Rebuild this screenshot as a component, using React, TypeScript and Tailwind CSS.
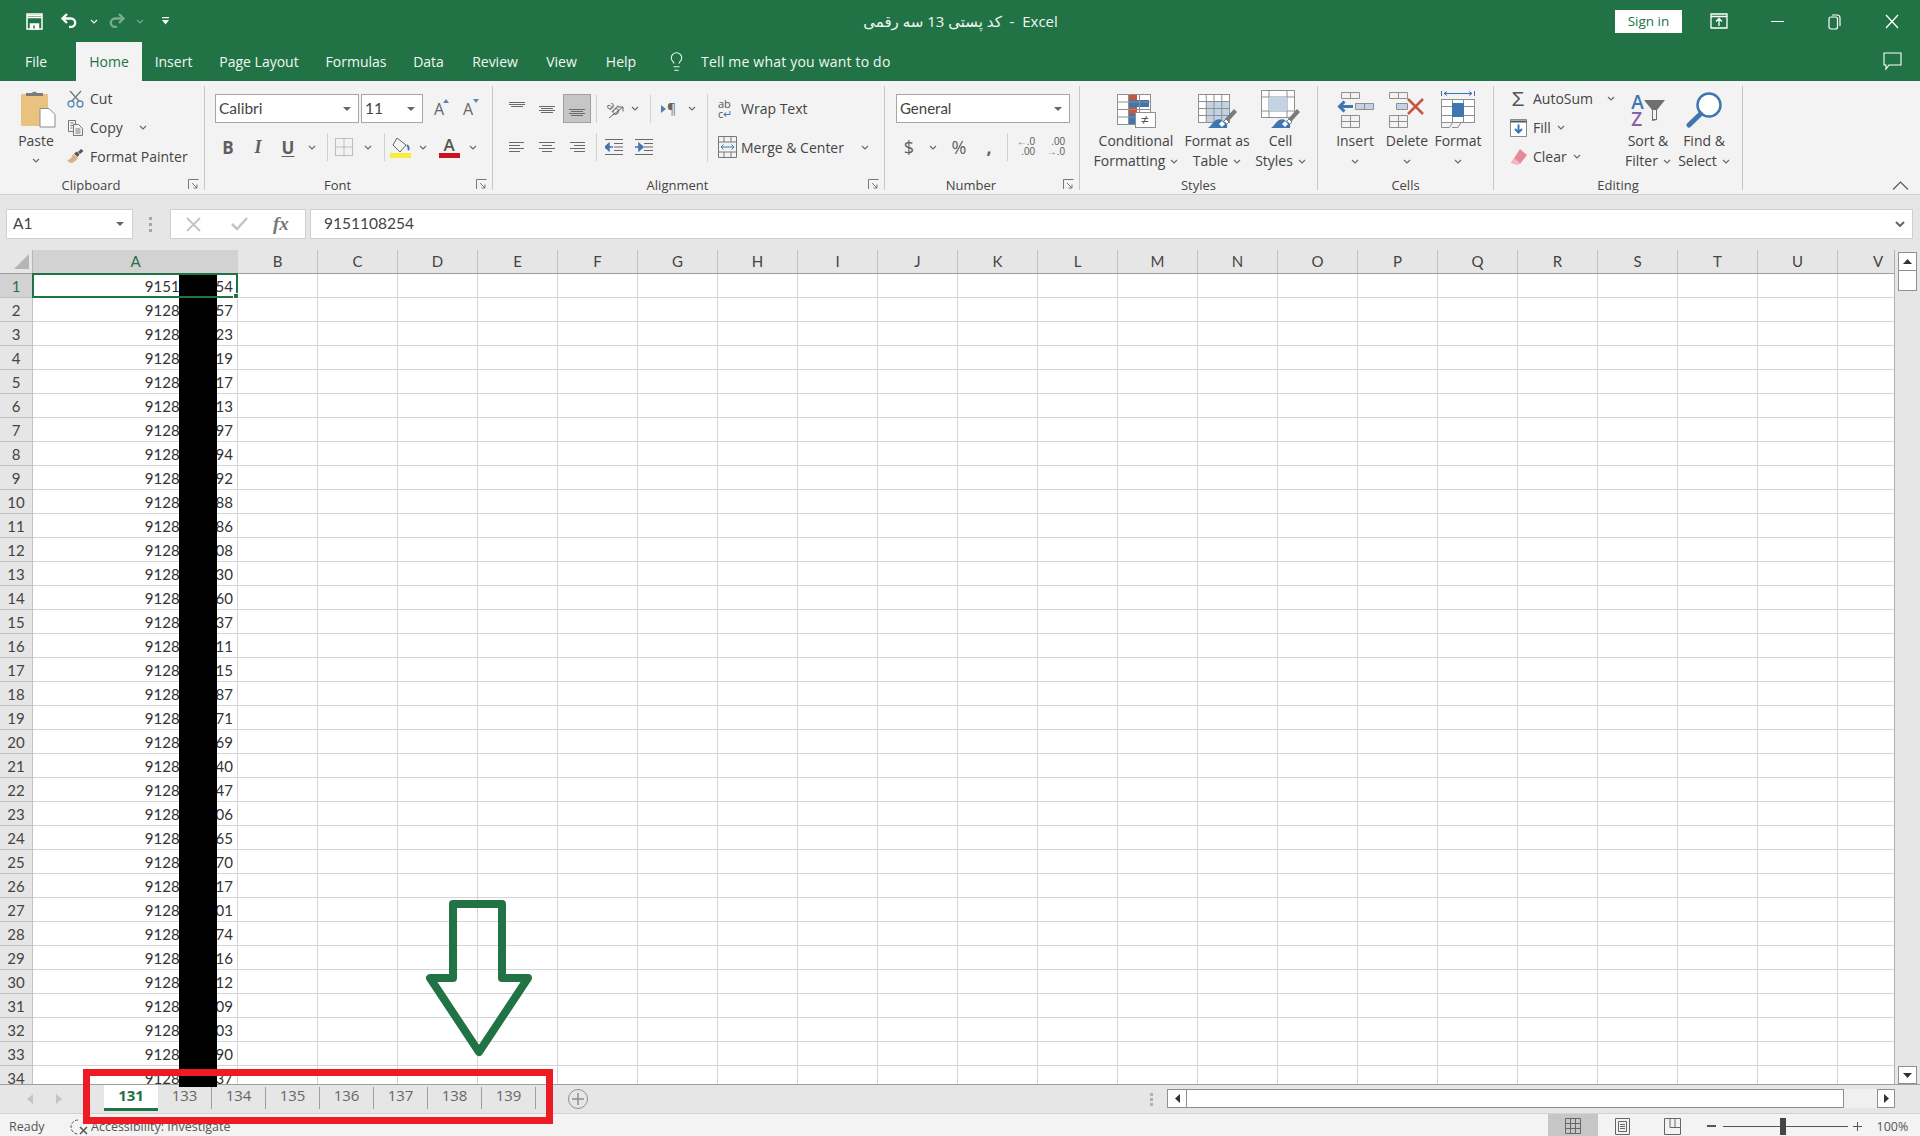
import type { ReactNode } from 'react';
import { Lightbulb } from 'lucide-react';

const suffixes = ['54', '57', '23', '19', '17', '13', '97', '94', '92', '88', '86', '08', '30', '60', '37', '11', '15', '87', '71', '69', '40', '47', '06', '65', '70', '17', '01', '74', '16', '12', '09', '03', '90', '37'];
const columns = ['B', 'C', 'D', 'E', 'F', 'G', 'H', 'I', 'J', 'K', 'L', 'M', 'N', 'O', 'P', 'Q', 'R', 'S', 'T', 'U'];
const sheets = ['133', '134', '135', '136', '137', '138', '139'];

function Caret({ color = '#666666' }: { color?: string }) {
    return (
        <svg width="8" height="5" viewBox="0 0 8 5" fill="none" stroke={color} strokeWidth="1.1">
            <path d="M1 1l3 3 3-3" />
        </svg>
    );
}

function DropTri() {
    return (
        <svg width="8" height="4" viewBox="0 0 8 4" fill="#666666">
            <path d="M0 0h8L4 4z" />
        </svg>
    );
}

function Lines({ rows, width = 16 }: { rows: [number, number, number][]; width?: number }) {
    return (
        <svg width={width} height="16" viewBox={`0 0 ${width} 16`} stroke="#6a6a6a" strokeWidth="1">
            {rows.map(([x1, x2, y], i) => (
                <line key={i} x1={x1} x2={x2} y1={y + 0.5} y2={y + 0.5} />
            ))}
        </svg>
    );
}

function Launcher() {
    return (
        <svg className="absolute bottom-0 right-[5px]" width="11" height="11" viewBox="0 0 11 11" fill="none" stroke="#777777">
            <path d="M.5 10V.5H10.5M4 4l5 5M9 5.5V9H5.5" />
        </svg>
    );
}

function Group({ label, width, launcher, children }: { label: string; width: string; launcher?: boolean; children: ReactNode }) {
    return (
        <div className={`relative flex h-[104px] shrink-0 flex-col border-r border-[#c6c6c6] ${width}`}>
            <div className="flex h-[93px] shrink-0">{children}</div>
            <div className={`text-center text-[13px] leading-[13px] text-[#444444] ${launcher ? 'pr-[22px]' : ''}`}>{label}</div>
            {launcher && <Launcher />}
        </div>
    );
}

function LargeButton({ width, icon, lines, caretOwnLine }: { width: string; icon: ReactNode; lines: string[]; caretOwnLine?: boolean }) {
    return (
        <div className={`flex shrink-0 flex-col items-center text-[14px] leading-[20px] text-[#444444] ${width}`}>
            <div className="flex h-[42px] items-end justify-center">{icon}</div>
            <div className="mt-[3px] whitespace-nowrap">{lines[0]}</div>
            {caretOwnLine ? (
                <div className="flex h-[20px] items-center">
                    <Caret />
                </div>
            ) : (
                <div className="flex items-center gap-[5px] whitespace-nowrap">
                    {lines[1]}
                    <Caret />
                </div>
            )}
        </div>
    );
}

function SmallRow({ icon, label, caretGap }: { icon: ReactNode; label: string; caretGap?: string }) {
    return (
        <div className="flex h-[29px] items-center whitespace-nowrap text-[14px] text-[#444444]">
            <div className="flex w-[24px] shrink-0 justify-center">{icon}</div>
            <span className="ml-[3px]">{label}</span>
            {caretGap && (
                <span className={`flex ${caretGap}`}>
                    <Caret />
                </span>
            )}
        </div>
    );
}

function Slot({ width, children }: { width: string; children: ReactNode }) {
    return <div className={`flex h-full shrink-0 items-center justify-center ${width}`}>{children}</div>;
}

const Sep = ({ className = '' }: { className?: string }) => <div className={`h-[28px] w-px shrink-0 bg-[#d0d0d0] ${className}`} />;

function SaveIcon() {
    return (
        <svg width="17" height="17" viewBox="0 0 17 17" fill="none" stroke="#ffffff" strokeWidth="1.5">
            <path d="M1 1h15v15H1z" />
            <path d="M1 2.5h15M1 4.5h15" />
            <path fill="#ffffff" d="M4.5 11h8v5h-8z" />
            <path stroke="#217346" d="M8 12.5v3" />
        </svg>
    );
}

function UndoIcon({ mirrored }: { mirrored?: boolean }) {
    return (
        <svg className={mirrored ? 'opacity-40 -scale-x-100' : ''} width="18" height="16" viewBox="0 0 18 16" fill="none" stroke="#ffffff" strokeWidth="2.4">
            <path d="M7 1L2.5 5.5 7 10" />
            <path d="M3 5.5h8a4.2 4.2 0 0 1 0 8.4H9" />
        </svg>
    );
}

function TitleBar() {
    return (
        <div className="flex h-[42px] shrink-0 items-center bg-[#217346] text-white">
            <div className="flex w-[863px] shrink-0 items-center pl-[26px]">
                <SaveIcon />
                <span className="ml-[17px] flex"><UndoIcon /></span>
                <span className="ml-[12px] flex"><Caret color="#ffffff" /></span>
                <span className="ml-[10px] flex"><UndoIcon mirrored /></span>
                <span className="ml-[10px] flex opacity-40"><Caret color="#ffffff" /></span>
                <svg className="ml-[18px]" width="7" height="8" viewBox="0 0 7 8" fill="#ffffff">
                    <path d="M0 0h7v1.2H0zM0 3h7L3.5 7.5z" />
                </svg>
            </div>
            <div className="w-[195px] shrink-0 whitespace-pre text-center font-['Open_Sans','DejaVu_Sans',sans-serif] text-[15px] text-[#f2f7f4]">
                کد پستی 13 سه رقمی  -  Excel
            </div>
            <div className="ml-[557px] flex h-[23px] w-[67px] shrink-0 items-center justify-center bg-white text-[13.5px] text-[#217346]">Sign in</div>
            <svg className="ml-[28px]" width="18" height="16" viewBox="0 0 18 16" fill="none" stroke="#ffffff" strokeWidth="1.3">
                <path d="M1 1h16v14H1zM1 3.5h16M9 13V6M6 8.5l3-3 3 3" />
            </svg>
            <div className="ml-[43px] h-px w-[13px] bg-white" />
            <svg className="ml-[44px]" width="13" height="17" viewBox="0 0 13 17" fill="none" stroke="#ffffff" strokeWidth="1.2">
                <rect x="1" y="4" width="8.5" height="12" rx="2" />
                <path d="M4 2h5a3 3 0 0 1 3 3v8" />
            </svg>
            <svg className="ml-[44px]" width="14" height="15" viewBox="0 0 14 15" fill="none" stroke="#ffffff" strokeWidth="1.3">
                <path d="M1 1l12 13M13 1L1 14" />
            </svg>
        </div>
    );
}

function TabRow() {
    const tabs: [string, string][] = [
        ['Insert', 'w-[63px]'],
        ['Page Layout', 'w-[108px]'],
        ['Formulas', 'w-[86px]'],
        ['Data', 'w-[59px]'],
        ['Review', 'w-[74px]'],
        ['View', 'w-[59px]'],
        ['Help', 'w-[60px]'],
    ];

    return (
        <div className="flex h-[39px] shrink-0 items-stretch bg-[#217346] text-[14px] text-[#f2f7f4]">
            <div className="flex w-[76px] items-center pl-[25px]">File</div>
            <div className="flex w-[66px] items-center justify-center bg-[#f3f3f3] text-[#217346]">Home</div>
            {tabs.map(([name, width]) => (
                <div key={name} className={`flex items-center justify-center ${width}`}>
                    {name}
                </div>
            ))}
            <div className="ml-[15px] flex items-center">
                <Lightbulb size={21} strokeWidth={1.2} />
                <span className="ml-[14px] tracking-[0.2px]">Tell me what you want to do</span>
            </div>
            <svg className="ml-[992px] self-center" width="19" height="19" viewBox="0 0 19 19" fill="none" stroke="#ffffff" strokeWidth="1.1">
                <path d="M1 1h17v12H6l-3 4v-4H1z" />
            </svg>
        </div>
    );
}

function Clipboard() {
    return (
        <Group label="Clipboard" width="w-[205px]" launcher>
            <div className="-mt-[2px] flex w-[63px] shrink-0 flex-col items-center pl-[9px] text-[14px] leading-[20px] text-[#444444]">
                <svg className="ml-[5px] mt-[6px]" width="35" height="38" viewBox="0 0 35 38">
                    <rect x="0" y="4" width="27" height="32" rx="1" fill="#e9c27f" />
                    <path d="M5 5V3h6a3 3 0 0 1 5 0h6v3H5z" fill="#7b7b7b" />
                    <path d="M19 18.500h9l6 6V37H19z" fill="#ffffff" stroke="#8c8c8c" />
                </svg>
                <div className="mt-[3px]">Paste</div>
                <div className="flex h-[18px] items-center"><Caret /></div>
            </div>
            <div className="-mt-[2px] flex flex-col">
                <SmallRow
                    label="Cut"
                    icon={
                        <svg width="17" height="18" viewBox="0 0 17 18" fill="none" stroke="#777777" strokeWidth="1.3">
                            <path d="M5 11L14 1M12 11L3 1" />
                            <circle cx="4" cy="14" r="3" stroke="#5a86b4" />
                            <circle cx="13" cy="14" r="3" stroke="#5a86b4" />
                        </svg>
                    }
                />
                <SmallRow
                    label="Copy"
                    caretGap="ml-[16px]"
                    icon={
                        <svg width="17" height="17" viewBox="0 0 17 17" fill="#f3f3f3" stroke="#777777">
                            <path d="M1.500 1.500h7v11h-7zM3.500 4h3M3.500 6.500h3M3.500 9h2" />
                            <path d="M6.500 5.500h5l4 4v7h-9z" />
                            <path d="M8.500 10h5M8.500 12h5M8.500 14h5" />
                        </svg>
                    }
                />
                <SmallRow
                    label="Format Painter"
                    icon={
                        <svg width="18" height="15" viewBox="0 0 18 15">
                            <path d="M1 11c3 0 5-3 6-6l5 4c-2 3-5 5-8 5z" fill="#d8b27c" />
                            <path d="M8 4.500l3-2 2.500 3-2 2.500zM12 3l3-3 2.500 2-3.500 3z" fill="#555555" />
                        </svg>
                    }
                />
            </div>
        </Group>
    );
}

function FontGroup() {
    return (
        <Group label="Font" width="w-[288px]" launcher>
            <div className="flex flex-col pl-[10px] pt-[8px]">
                <div className="flex h-[29px] items-stretch font-['Lato',sans-serif] text-[15.5px] text-[#444444]">
                    <div className="flex w-[144px] items-center justify-between border border-[#a6a6a6] bg-white pl-[3px] pr-[7px]">
                        Calibri
                        <DropTri />
                    </div>
                    <div className="ml-[2px] flex w-[62px] items-center justify-between border border-[#a6a6a6] bg-white pl-[3px] pr-[7px]">
                        11
                        <DropTri />
                    </div>
                    <div className="relative flex w-[32px] items-center justify-center font-['Open_Sans',sans-serif] text-[16px] text-[#666666]">
                        A
                        <svg className="absolute right-[6px] top-[5px]" width="6" height="4" fill="#5a86b4"><path d="M0 4h6L3 0z" /></svg>
                    </div>
                    <div className="relative flex w-[26px] items-center justify-center font-['Open_Sans',sans-serif] text-[16px] text-[#666666]">
                        A
                        <svg className="absolute right-[2px] top-[5px]" width="6" height="4" fill="#5a86b4"><path d="M0 0h6L3 4z" /></svg>
                    </div>
                </div>
                <div className="-ml-[2px] mt-[9px] flex h-[30px] items-center text-[#5f5f5f]">
                    <Slot width="w-[30px]"><span className="text-[17px] font-bold leading-none">B</span></Slot>
                    <Slot width="w-[30px]"><span className="font-['Liberation_Serif',serif] text-[18px] font-bold italic leading-none">I</span></Slot>
                    <Slot width="w-[30px]"><span className="text-[17px] font-bold leading-none underline underline-offset-2">U</span></Slot>
                    <Slot width="w-[18px]"><Caret /></Slot>
                    <Sep className="ml-[6px]" />
                    <Slot width="w-[31px]">
                        <svg width="18" height="18" viewBox="0 0 18 18" fill="none" stroke="#8a8a8a" strokeDasharray="1 1">
                            <path d="M.5.5h17v17H.5zM9 .5v17M.5 9h17" />
                        </svg>
                    </Slot>
                    <Slot width="w-[18px]"><Caret /></Slot>
                    <Sep className="ml-[7px]" />
                    <Slot width="w-[30px]">
                        <svg width="21" height="21" viewBox="0 0 21 21">
                            <path d="M7 1l9 7-6 7-7-7z" fill="#f3f3f3" stroke="#666666" />
                            <path d="M17 8c2 2 2 4 1 5" fill="none" stroke="#3f76b0" strokeWidth="2" />
                            <rect x="0" y="16" width="21" height="5" fill="#f6ed3c" />
                        </svg>
                    </Slot>
                    <Slot width="w-[15px]"><Caret /></Slot>
                    <div className="ml-[4px] flex w-[30px] shrink-0 flex-col items-center">
                        <span className="text-[17px] font-semibold leading-[17px] text-[#555555]">A</span>
                        <div className="h-[5px] w-[21px] bg-[#c8141c]" />
                    </div>
                    <Slot width="w-[17px]"><Caret /></Slot>
                </div>
            </div>
        </Group>
    );
}

const alignTop: [number, number, number][] = [[0, 16, 1], [0, 16, 3], [2, 14, 5]];
const alignMid: [number, number, number][] = [[0, 16, 5], [2, 14, 7], [0, 16, 9], [2, 14, 11]];
const alignBot: [number, number, number][] = [[0, 16, 8], [2, 14, 10], [0, 16, 12], [2, 14, 14]];
const textLeft: [number, number, number][] = [[0, 15, 3], [0, 11, 6], [0, 15, 9], [0, 11, 12]];
const textCenter: [number, number, number][] = [[0, 16, 3], [3, 13, 6], [0, 16, 9], [3, 13, 12]];
const textRight: [number, number, number][] = [[1, 16, 3], [5, 16, 6], [1, 16, 9], [5, 16, 12]];

function IndentIcon({ flip }: { flip?: boolean }) {
    return (
        <svg width="18" height="16" viewBox="0 0 18 16" fill="none">
            <path d="M0 .5h18M9 4.500h9M9 8h9M9 11.500h9M0 15.500h18" stroke="#6a6a6a" />
            <path d={flip ? 'M0 8h5M4 4.500L8 8l-4 3.500z' : 'M8 8H3M4 4.500L0 8l4 3.500z'} stroke="#3f76b0" strokeWidth="1.5" fill="#3f76b0" />
        </svg>
    );
}

function Alignment() {
    return (
        <Group label="Alignment" width="w-[392px]" launcher>
            <div className="flex flex-col pl-[9px] pt-[8px]">
                <div className="flex h-[29px] items-center">
                    <Slot width="w-[30px]"><Lines rows={alignTop} /></Slot>
                    <Slot width="w-[30px]"><Lines rows={alignMid} /></Slot>
                    <div className="ml-px flex h-[29px] w-[28px] items-center justify-center border border-[#a0a0a0] bg-[#c6c6c6]">
                        <Lines rows={alignBot} />
                    </div>
                    <Sep className="ml-[5px]" />
                    <Slot width="w-[33px]">
                        <svg className="overflow-visible" width="22" height="22" viewBox="0 0 22 22" fill="none" stroke="#666666">
                            <text x="4" y="12" fontSize="12" fill="#666666" stroke="none" transform="rotate(45 8 9)">ab</text>
                            <path d="M6 20L20 9M15 9h5v4.500" />
                        </svg>
                    </Slot>
                    <Slot width="w-[10px]"><Caret /></Slot>
                    <Sep className="ml-[10px]" />
                    <div className="ml-[10px] flex w-[20px] items-center text-[14px] leading-none text-[#666666]">
                        <svg width="5" height="8" fill="#4f7fb0"><path d="M0 0l5 4-5 4z" /></svg>
                        <span className="ml-px">¶</span>
                    </div>
                    <Slot width="w-[22px]"><Caret /></Slot>
                </div>
                <div className="mt-[9px] flex h-[30px] items-center">
                    <Slot width="w-[30px]"><Lines rows={textLeft} /></Slot>
                    <Slot width="w-[30px]"><Lines rows={textCenter} /></Slot>
                    <Slot width="w-[29px]"><Lines rows={textRight} /></Slot>
                    <Sep className="ml-[5px]" />
                    <Slot width="w-[33px]"><IndentIcon /></Slot>
                    <Slot width="w-[27px]"><IndentIcon flip /></Slot>
                </div>
            </div>
            <div className="ml-[4px] mt-[8px] h-[68px] w-px shrink-0 bg-[#d0d0d0]" />
            <div className="flex flex-col pl-[10px] pt-[8px] text-[14px] text-[#444444]">
                <div className="flex h-[29px] items-center">
                    <div className="flex w-[20px] flex-col font-['Open_Sans',sans-serif] text-[11px] leading-[10px] text-[#555555]">
                        <span>ab</span>
                        <span>
                            c<span className="text-[#3f76b0]">↵</span>
                        </span>
                    </div>
                    <span className="ml-[3px]">Wrap Text</span>
                </div>
                <div className="mt-[9px] flex h-[30px] items-center">
                    <svg width="19" height="22" viewBox="0 0 19 22" fill="none" stroke="#777777">
                        <path d="M.5.5h18v21H.5zM.5 6h18M.5 16h18M6 .5V6M13 .5V6M6 16v5.500M13 16v5.500" />
                        <path d="M3 11h13M5.500 8.500L3 11l2.500 2.500M13.500 8.500L16 11l-2.500 2.500" stroke="#3f76b0" />
                    </svg>
                    <span className="ml-[4px]">Merge &amp; Center</span>
                    <span className="ml-[17px] flex"><Caret /></span>
                </div>
            </div>
        </Group>
    );
}

function NumberGroup() {
    return (
        <Group label="Number" width="w-[195px]" launcher>
            <div className="flex flex-col pl-[11px] pt-[8px]">
                <div className="flex h-[29px] w-[174px] items-center justify-between border border-[#a6a6a6] bg-white pl-[3px] pr-[7px] font-['Lato',sans-serif] text-[15px] text-[#444444]">
                    General
                    <DropTri />
                </div>
                <div className="mt-[9px] flex h-[30px] items-center text-[#5f5f5f]">
                    <Slot width="w-[26px]"><span className="text-[18px] leading-none">$</span></Slot>
                    <Slot width="w-[22px]"><Caret /></Slot>
                    <Slot width="w-[30px]"><span className="text-[18px] leading-none">%</span></Slot>
                    <Slot width="w-[30px]"><span className="text-[18px] font-bold leading-none">,</span></Slot>
                    <Sep className="ml-[3px]" />
                    <Slot width="w-[36px]">
                        <div className="font-['Liberation_Sans',sans-serif] text-[10px] leading-[10px]">
                            <div><span className="text-[#3f76b0]">←</span>.0</div>
                            <div className="text-right">.00</div>
                        </div>
                    </Slot>
                    <Slot width="w-[24px]">
                        <div className="font-['Liberation_Sans',sans-serif] text-[10px] leading-[10px]">
                            <div className="text-right">.00</div>
                            <div><span className="text-[#3f76b0]">→</span>.0</div>
                        </div>
                    </Slot>
                </div>
            </div>
        </Group>
    );
}

function TableGrid({ x, y, cols, rows, w, h }: { x: number; y: number; cols: number; rows: number; w: number; h: number }) {
    const cells = [];
    for (let i = 0; i <= cols; i++) cells.push(<line key={`c${i}`} x1={x + i * w + 0.5} x2={x + i * w + 0.5} y1={y} y2={y + rows * h} />);
    for (let i = 0; i <= rows; i++) cells.push(<line key={`r${i}`} y1={y + i * h + 0.5} y2={y + i * h + 0.5} x1={x} x2={x + cols * w + 1} />);
    return <g stroke="#8f8f8f">{cells}</g>;
}

function ConditionalIcon() {
    return (
        <svg width="39" height="34" viewBox="0 0 39 34">
            <rect x="0" y="0" width="33" height="30" fill="#ffffff" />
            <rect x="11" y="0" width="9" height="6" fill="#c5563f" />
            <rect x="11" y="6" width="21" height="7" fill="#3f76b0" />
            <rect x="11" y="13" width="9" height="7" fill="#c5563f" />
            <rect x="11" y="20" width="7" height="10" fill="#3f76b0" />
            <TableGrid x={0} y={0} cols={3} rows={4} w={11} h={7.500} />
            <rect x="18.500" y="18.500" width="20" height="15" fill="#ffffff" stroke="#8f8f8f" />
            <text x="24" y="31" fontSize="14" fill="#555555">≠</text>
        </svg>
    );
}

function BrushOverlay() {
    return (
        <g>
            <path d="M36 9l3 3-9 10-3-3z" fill="#7a7a7a" />
            <path d="M28 19l3 3-3 3-3-3z" fill="#ffffff" stroke="#7a7a7a" />
            <path d="M25 21c3 1 5 3 4 7H10c3-2 5-6 8-8 2-1 5-1 7 1z" fill="#3f76b0" />
            <path d="M21 24l3-3 3 3-3 3z" fill="#ffffff" />
        </g>
    );
}

function FormatTableIcon() {
    return (
        <svg width="39" height="34" viewBox="0 0 39 34">
            <rect x="0" y="0" width="31" height="28" fill="#ffffff" />
            <rect x="8" y="7" width="23" height="21" fill="#c2d3e6" />
            <TableGrid x={0} y={0} cols={4} rows={4} w={7.750} h={7} />
            <g transform="translate(0 6)"><BrushOverlay /></g>
        </svg>
    );
}

function CellStylesIcon() {
    return (
        <svg width="39" height="38" viewBox="0 0 39 38">
            <rect x=".5" y=".5" width="33" height="27" fill="#ffffff" stroke="#8f8f8f" />
            <path d="M8 .5v27M26 .5v27M.5 7h33M.5 21h33" stroke="#8f8f8f" />
            <rect x="8" y="7" width="18" height="14" fill="#c2d3e6" />
            <g transform="translate(0 10)"><BrushOverlay /></g>
        </svg>
    );
}

function InsertIcon() {
    return (
        <svg width="37" height="36" viewBox="0 0 37 36" fill="none" stroke="#8f8f8f">
            <path d="M4.500.5h18v6h-18zM13.500.5v6M4.500 23.500h18v12h-18zM13.500 23.500v12M4.500 29.500h18" />
            <path d="M18.500 11.500h18v6h-18zM27.500 11.500v6" fill="#c2d3e6" />
            <path d="M16 14.500H3M7.500 9.500l-5 5 5 5" stroke="#3f76b0" strokeWidth="3" />
        </svg>
    );
}

function DeleteIcon() {
    return (
        <svg width="36" height="36" viewBox="0 0 36 36" fill="none" stroke="#8f8f8f">
            <path d="M.5.5h18v6H.5zM9.500.5v6M.5 23.500h18v12H.5zM9.500 23.500v12M.5 29.500h18" />
            <path d="M7.500 11.500h11v6h-11z" fill="#c2d3e6" />
            <path d="M19 7l15 15M34 7L19 22" stroke="#c5563f" strokeWidth="2.500" />
        </svg>
    );
}

function FormatIcon() {
    return (
        <svg width="34" height="37" viewBox="0 0 34 37" fill="none" stroke="#8f8f8f">
            <path d="M.5 0v5M33.500 0v5" stroke="#3f76b0" />
            <path d="M3 2.500h28M6 .5L3 2.500l3 2M28 .5l3 2-3 2" stroke="#3f76b0" />
            <rect x=".5" y="8.500" width="33" height="23" fill="#ffffff" />
            <path d="M11.500 8.500v23M22.500 8.500v23M.5 15.500h33M.5 24.500h33" />
            <rect x="11" y="12" width="12" height="14" fill="#3f76b0" stroke="none" />
            <path d="M.5 31.500v5h8l3-5M11 36.500h6l3-5" />
        </svg>
    );
}

function Styles() {
    return (
        <Group label="Styles" width="w-[238px]">
            <div className="ml-[9px] flex">
                <LargeButton width="w-[94px]" icon={<ConditionalIcon />} lines={['Conditional', 'Formatting']} />
                <LargeButton width="w-[68px]" icon={<FormatTableIcon />} lines={['Format as', 'Table']} />
                <LargeButton width="w-[59px]" icon={<CellStylesIcon />} lines={['Cell', 'Styles']} />
            </div>
        </Group>
    );
}

function Cells() {
    return (
        <Group label="Cells" width="w-[176px]">
            <div className="ml-[10px] flex">
                <LargeButton width="w-[54px]" icon={<InsertIcon />} lines={['Insert']} caretOwnLine />
                <LargeButton width="w-[50px]" icon={<DeleteIcon />} lines={['Delete']} caretOwnLine />
                <LargeButton width="w-[52px]" icon={<FormatIcon />} lines={['Format']} caretOwnLine />
            </div>
        </Group>
    );
}

function Editing() {
    return (
        <Group label="Editing" width="w-[249px]">
            <div className="-mt-[2px] ml-[12px] flex w-[112px] shrink-0 flex-col">
                <SmallRow label="AutoSum" caretGap="ml-[14px]" icon={<span className="font-['Liberation_Sans',sans-serif] text-[21px] leading-none text-[#555555]">Σ</span>} />
                <SmallRow
                    label="Fill"
                    caretGap="ml-[6px]"
                    icon={
                        <svg width="17" height="18" viewBox="0 0 17 18" fill="#ffffff" stroke="#8a8a8a">
                            <path d="M.5.5h16v17H.5z" />
                            <path d="M.5 2.500h16" stroke="#555555" strokeWidth="2" />
                            <path d="M8.500 5.500v8M5 10l3.500 3.500L12 10" fill="none" stroke="#3f76b0" strokeWidth="2" />
                        </svg>
                    }
                />
                <SmallRow
                    label="Clear"
                    caretGap="ml-[6px]"
                    icon={
                        <svg width="17" height="16" viewBox="0 0 17 16">
                            <path d="M10 0l7 6-7 9-9-1z" fill="#e68a9b" />
                            <path d="M1 14l3-5 6 5-3 2z" fill="#f3b8c2" />
                        </svg>
                    }
                />
            </div>
            <LargeButton
                width="w-[60px]"
                icon={
                    <div className="flex items-start">
                        <div className="flex flex-col font-['Open_Sans',sans-serif] text-[19px] font-semibold leading-[17px]">
                            <span className="text-[#3f76b0]">A</span>
                            <span className="text-[#8a5fa8]">Z</span>
                        </div>
                        <svg className="mt-[6px]" width="21" height="21" viewBox="0 0 21 21">
                            <path d="M0 0h21l-8 10v10l-5 1V10z" fill="#6f6f6f" />
                            <path d="M9 10h3v9H9z" fill="#f3f3f3" />
                        </svg>
                    </div>
                }
                lines={['Sort &', 'Filter']}
            />
            <LargeButton
                width="w-[52px]"
                icon={
                    <svg width="36" height="36" viewBox="0 0 36 36" fill="none">
                        <circle cx="23" cy="13" r="11.500" stroke="#3f76b0" strokeWidth="2.500" fill="#ffffff" />
                        <path d="M14.500 22L3 33" stroke="#3f76b0" strokeWidth="5" strokeLinecap="round" />
                    </svg>
                }
                lines={['Find &', 'Select']}
            />
        </Group>
    );
}

function Ribbon() {
    return (
        <div className="flex h-[114px] shrink-0 border-b border-[#d2d2d2] bg-[#f3f3f3] pt-[5px]">
            <Clipboard />
            <FontGroup />
            <Alignment />
            <NumberGroup />
            <Styles />
            <Cells />
            <Editing />
            <div className="flex flex-1 items-end justify-end pb-[4px] pr-[11px]">
                <svg width="17" height="9" viewBox="0 0 17 9" fill="none" stroke="#555555" strokeWidth="1.1">
                    <path d="M1 8.500l7.500-7.500L16 8.500" />
                </svg>
            </div>
        </div>
    );
}

function FormulaBar() {
    return (
        <div className="flex h-[55px] shrink-0 items-center bg-[#e6e6e6] pl-[6px] pr-[7px] pt-[3px] font-['Lato',sans-serif] text-[15.5px] text-[#444444]">
            <div className="flex h-[30px] w-[127px] items-center justify-between border border-[#d0d0d0] bg-white pl-[6px] pr-[8px]">
                A1
                <DropTri />
            </div>
            <div className="ml-[16px] flex w-[4px] flex-col gap-[3px]">
                <div className="h-[3px] w-[3px] bg-[#a6a6a6]" />
                <div className="h-[3px] w-[3px] bg-[#a6a6a6]" />
                <div className="h-[3px] w-[3px] bg-[#a6a6a6]" />
            </div>
            <div className="ml-[17px] flex h-[30px] w-[136px] items-center border border-[#d0d0d0] bg-white">
                <svg className="ml-[15px]" width="15" height="15" viewBox="0 0 15 15" fill="none" stroke="#c4c4c4" strokeWidth="1.800">
                    <path d="M1 1l13 13M14 1L1 14" />
                </svg>
                <svg className="ml-[30px]" width="17" height="14" viewBox="0 0 17 14" fill="none" stroke="#c4c4c4" strokeWidth="2.500">
                    <path d="M1 7l5 5L16 1" />
                </svg>
                <span className="ml-[25px] font-['Liberation_Serif',serif] text-[19px] font-bold italic text-[#777777]">fx</span>
            </div>
            <div className="ml-[4px] flex h-[30px] flex-1 items-center justify-between border border-[#d0d0d0] bg-white pl-[13px] pr-[7px]">
                9151108254
                <svg width="10" height="6" viewBox="0 0 10 6" fill="none" stroke="#666666" strokeWidth="2">
                    <path d="M1 1l4 4 4-4" />
                </svg>
            </div>
        </div>
    );
}

function Sheet() {
    return (
        <div className="flex h-[834px] w-[1895px] shrink-0 flex-col overflow-hidden border-r border-[#b0b0b0] font-['Lato',sans-serif] text-[15px] text-[#333333]">
            <div className="flex h-[24px] shrink-0 border-b border-[#9e9e9e] bg-[#e6e6e6] text-[#444444]">
                <div className="flex h-full w-[33px] shrink-0 items-center justify-end border-r border-[#b8b8b8] pr-[3px]">
                    <svg width="15" height="15" viewBox="0 0 15 15" fill="#b5b5b5"><path d="M15 0v15H0z" /></svg>
                </div>
                <div className="flex w-[205px] shrink-0 items-center justify-center bg-[#d2d2d2] text-[#217346]">A</div>
                {columns.map((col) => (
                    <div key={col} className="flex w-[80px] shrink-0 items-center justify-center border-r border-[#c2c2c2]">
                        {col}
                    </div>
                ))}
                <div className="flex w-[80px] shrink-0 items-center justify-center">V</div>
            </div>
            {suffixes.map((suffix, i) => (
                <div key={i} className="flex h-[24px] shrink-0">
                    <div className={`flex w-[33px] shrink-0 items-center justify-center border-b border-r border-[#c2c2c2] pt-[2px] ${i === 0 ? 'bg-[#d2d2d2] text-[#2f6b4a]' : 'bg-[#e6e6e6] text-[#444444]'}`}>{i + 1}</div>
                    <div className="relative flex w-[205px] shrink-0 items-center justify-end border-b border-r border-[#d4d4d4] pr-[4px] pt-[2px]">
                        <span>{i === 0 ? '9151' : '9128'}</span>
                        <span className="w-[36px]" />
                        <span>{suffix}</span>
                        {i === 0 && (
                            <div className="absolute -left-px -top-px z-10 h-[25px] w-[206px] border-2 border-[#217346]">
                                <div className="absolute -bottom-[3px] -right-[3px] h-[6px] w-[6px] border border-white bg-[#217346]" />
                            </div>
                        )}
                    </div>
                    {columns.map((col) => (
                        <div key={col} className="w-[80px] shrink-0 border-b border-r border-[#d4d4d4]" />
                    ))}
                    <div className="w-[80px] shrink-0 border-b border-[#d4d4d4]" />
                </div>
            ))}
        </div>
    );
}

function VerticalScroll() {
    return (
        <div className="flex flex-1 flex-col bg-[#e6e6e6] pl-[3px] pr-[3px] pt-[2px]">
            <div className="flex h-[19px] items-center justify-center border border-[#8f8f8f] bg-white">
                <svg width="9" height="5" fill="#333333"><path d="M0 5h9L4.500 0z" /></svg>
            </div>
            <div className="h-[20px] border border-t-0 border-[#8f8f8f] bg-white" />
            <div className="flex-1" />
            <div className="flex h-[18px] items-center justify-center border border-[#8f8f8f] bg-white">
                <svg width="9" height="5" fill="#333333"><path d="M0 0h9L4.500 5z" /></svg>
            </div>
        </div>
    );
}

function TabBar() {
    return (
        <div className="flex h-[29px] shrink-0 items-stretch border-t border-[#9e9e9e] bg-[#e6e6e6] font-['Open_Sans',sans-serif] text-[15px] text-[#666666]">
            <div className="flex w-[104px] shrink-0 items-center pl-[27px]">
                <svg width="6" height="10" fill="#c4c4c4"><path d="M6 0v10L0 5z" /></svg>
                <svg className="ml-[23px]" width="6" height="10" fill="#c4c4c4"><path d="M0 0v10l6-5z" /></svg>
            </div>
            <div className="mb-[2px] flex w-[54px] shrink-0 items-center justify-center border-b-[3px] border-[#217346] bg-white pb-[3px] font-bold text-[#217346]">131</div>
            {sheets.map((name) => (
                <div key={name} className="mb-[4px] mt-[2px] flex w-[54px] shrink-0 items-center justify-center border-r border-[#9e9e9e] pb-[5px]">
                    {name}
                </div>
            ))}
            <div className="ml-[32px] mt-[4px] flex h-[20px] w-[20px] shrink-0 items-center justify-center rounded-full border border-[#8f8f8f] text-[#8f8f8f]">
                <svg width="12" height="12" fill="none" stroke="#8f8f8f" strokeWidth="1.500"><path d="M6 0v12M0 6h12" /></svg>
            </div>
            <div className="ml-[562px] flex w-[4px] flex-col justify-center gap-[2px]">
                <div className="h-[3px] w-[3px] bg-[#b0b0b0]" />
                <div className="h-[3px] w-[3px] bg-[#b0b0b0]" />
                <div className="h-[3px] w-[3px] bg-[#b0b0b0]" />
            </div>
            <div className="ml-[13px] mt-[4px] flex h-[19px] w-[728px] shrink-0 bg-[#f0f0f0]">
                <div className="flex w-[20px] items-center justify-center border border-[#8f8f8f] bg-white">
                    <svg width="5" height="9" fill="#333333"><path d="M5 0v9L0 4.500z" /></svg>
                </div>
                <div className="w-[657px] border-y border-r border-[#8f8f8f] bg-white" />
                <div className="flex-1" />
                <div className="flex w-[18px] items-center justify-center border border-[#8f8f8f] bg-white">
                    <svg width="5" height="9" fill="#333333"><path d="M0 0v9l5-4.500z" /></svg>
                </div>
            </div>
        </div>
    );
}

function StatusBar() {
    return (
        <div className="flex h-[23px] shrink-0 items-center border-t border-[#d2d2d2] bg-[#f3f3f3] text-[12.500px] text-[#555555]">
            <span className="ml-[9px] w-[60px] pt-[5px]">Ready</span>
            <svg className="mt-[4px]" width="20" height="18" viewBox="0 0 20 18" fill="none" stroke="#555555">
                <path d="M9 2a7 7 0 1 0 0 14" strokeDasharray="3 1.500" />
                <path d="M11 9l7 7M18 9l-7 7" strokeWidth="1.500" />
            </svg>
            <span className="ml-[2px] pt-[5px]">Accessibility: Investigate</span>
            <div className="ml-[1317px] flex h-full w-[50px] items-center justify-center bg-[#c6c6c6] pt-[2px]">
                <svg width="16" height="16" fill="none" stroke="#666666"><path d="M.5.5h15v15H.5zM5.500.5v15M10.500.5v15M.5 5.500h15M.5 10.500h15" /></svg>
            </div>
            <div className="flex w-[50px] justify-center pt-[2px]">
                <svg width="15" height="17" fill="none" stroke="#666666"><path d="M.5.5h14v16H.5zM3.500 3.500h8v10h-8zM5 6.500h5M5 8.500h5M5 10.500h5" /></svg>
            </div>
            <div className="flex w-[50px] justify-center pt-[2px]">
                <svg width="17" height="17" fill="none" stroke="#666666"><path d="M.5.5h16v16H.5zM6 .5v9h5v-9M11 9.500h5.500" /></svg>
            </div>
            <div className="ml-[9px] mt-[2px] h-[2px] w-[9px] bg-[#555555]" />
            <div className="relative ml-[7px] mt-[2px] h-px w-[125px] bg-[#555555]">
                <div className="absolute -top-[8px] left-[57px] h-[17px] w-[6px] bg-[#444444]" />
            </div>
            <svg className="ml-[5px] mt-[2px]" width="9" height="9" stroke="#555555"><path d="M4.500 0v9M0 4.500h9" /></svg>
            <span className="ml-[15px] pt-[4px]">100%</span>
        </div>
    );
}

export default function App() {
    return (
        <div className="relative flex h-[1136px] w-[1920px] flex-col overflow-hidden bg-white font-['Open_Sans',sans-serif]">
            <TitleBar />
            <TabRow />
            <Ribbon />
            <FormulaBar />
            <div className="flex h-[834px] shrink-0">
                <Sheet />
                <VerticalScroll />
            </div>
            <TabBar />
            <StatusBar />

            <div className="absolute left-[179px] top-[274px] h-[813px] w-[38px] bg-black" />
            <div className="absolute left-[83px] top-[1069px] h-[55px] w-[470px] border-[7px] border-[#ed1c24]" />
            <svg className="absolute left-[420px] top-[895px]" width="120" height="170" viewBox="420 895 120 170" fill="none" stroke="#217346" strokeWidth="8" strokeLinejoin="round">
                <path d="M453 904h49v74h26l-49 74-49-74h23z" />
            </svg>
        </div>
    );
}
